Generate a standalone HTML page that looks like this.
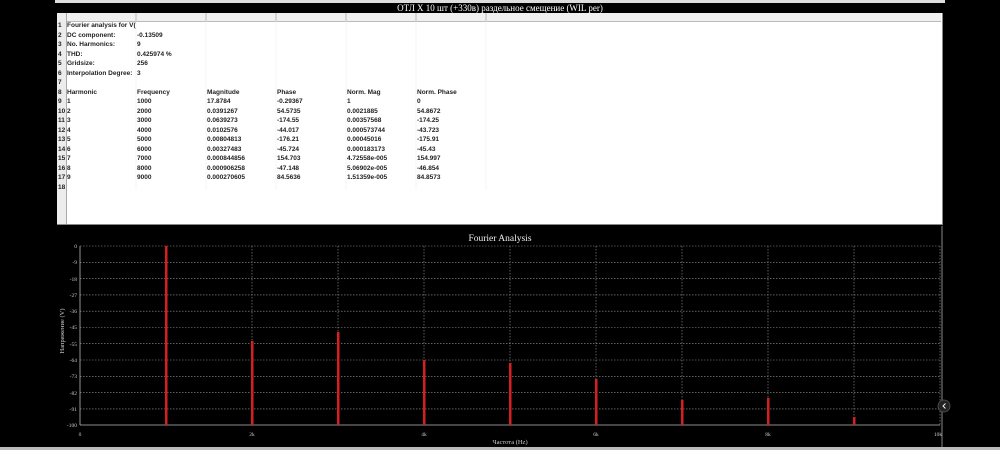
<!DOCTYPE html>
<html><head><meta charset="utf-8"><style>
html,body{margin:0;padding:0;width:1000px;height:450px;background:#000;overflow:hidden;font-family:"Liberation Sans",sans-serif}
.abs{position:absolute}
.t{position:absolute;font-size:6.5px;font-weight:bold;color:#222;white-space:nowrap;line-height:9px}
.rn{position:absolute;left:57px;width:9px;font-size:6.5px;font-weight:bold;color:#222;line-height:9px;text-align:left;padding-left:1px}
</style></head><body>
<div class="abs" style="left:55px;top:0;width:890px;height:3px;background:#ddd"></div>
<div class="abs" style="left:55px;top:3px;width:890px;height:10px;background:#000;color:#fff;font-family:'Liberation Serif',serif;font-size:9px;line-height:10px;text-align:center">ОТЛ X 10 шт (+330в) раздельное смещение (WIL per)</div>
<div class="abs" style="left:57px;top:13px;width:884px;height:211px;background:#fff;border:1px solid #888;border-top:none"></div>
<div class="abs" style="left:57px;top:13px;width:884px;height:8px;background:#f0f0f0;border-bottom:1px solid #bbb"></div>
<div class="abs" style="left:57px;top:13px;width:9px;height:211px;background:#ececec;border-right:1px solid #aaa"></div>
<svg class="abs" style="left:0;top:0" width="1000" height="230">
<g stroke="#aaa" stroke-width="0.8">
<line x1="136" y1="13" x2="136" y2="21"/><line x1="206" y1="13" x2="206" y2="21"/><line x1="276" y1="13" x2="276" y2="21"/><line x1="346" y1="13" x2="346" y2="21"/><line x1="416" y1="13" x2="416" y2="21"/><line x1="486" y1="13" x2="486" y2="21"/>
</g>
<g stroke="#eee" stroke-width="0.6">
<line x1="136" y1="21" x2="136" y2="190"/><line x1="206" y1="21" x2="206" y2="190"/><line x1="276" y1="21" x2="276" y2="190"/><line x1="346" y1="21" x2="346" y2="190"/><line x1="416" y1="21" x2="416" y2="190"/><line x1="486" y1="21" x2="486" y2="190"/>
</g>
</svg>
<div id="rows"></div>
<div class="rn" style="top:21px">1</div><div class="t" style="left:67px;top:21px">Fourier analysis for V(</div>
<div class="rn" style="top:30.5px">2</div><div class="t" style="left:67px;top:30.5px">DC component:</div><div class="t" style="left:137px;top:30.5px">-0.13509</div>
<div class="rn" style="top:40px">3</div><div class="t" style="left:67px;top:40px">No. Harmonics:</div><div class="t" style="left:137px;top:40px">9</div>
<div class="rn" style="top:49.5px">4</div><div class="t" style="left:67px;top:49.5px">THD:</div><div class="t" style="left:137px;top:49.5px">0.425974 %</div>
<div class="rn" style="top:59px">5</div><div class="t" style="left:67px;top:59px">Gridsize:</div><div class="t" style="left:137px;top:59px">256</div>
<div class="rn" style="top:68.5px">6</div><div class="t" style="left:67px;top:68.5px">Interpolation Degree:</div><div class="t" style="left:137px;top:68.5px">3</div>
<div class="rn" style="top:78px">7</div>
<div class="rn" style="top:87.5px">8</div><div class="t" style="left:67px;top:87.5px">Harmonic</div><div class="t" style="left:137px;top:87.5px">Frequency</div><div class="t" style="left:207px;top:87.5px">Magnitude</div><div class="t" style="left:277px;top:87.5px">Phase</div><div class="t" style="left:347px;top:87.5px">Norm. Mag</div><div class="t" style="left:417px;top:87.5px">Norm. Phase</div>
<div class="rn" style="top:97px">9</div><div class="t" style="left:67px;top:97px">1</div><div class="t" style="left:137px;top:97px">1000</div><div class="t" style="left:207px;top:97px">17.8784</div><div class="t" style="left:277px;top:97px">-0.29367</div><div class="t" style="left:347px;top:97px">1</div><div class="t" style="left:417px;top:97px">0</div>
<div class="rn" style="top:106.5px">10</div><div class="t" style="left:67px;top:106.5px">2</div><div class="t" style="left:137px;top:106.5px">2000</div><div class="t" style="left:207px;top:106.5px">0.0391267</div><div class="t" style="left:277px;top:106.5px">54.5735</div><div class="t" style="left:347px;top:106.5px">0.0021885</div><div class="t" style="left:417px;top:106.5px">54.8672</div>
<div class="rn" style="top:116px">11</div><div class="t" style="left:67px;top:116px">3</div><div class="t" style="left:137px;top:116px">3000</div><div class="t" style="left:207px;top:116px">0.0639273</div><div class="t" style="left:277px;top:116px">-174.55</div><div class="t" style="left:347px;top:116px">0.00357568</div><div class="t" style="left:417px;top:116px">-174.25</div>
<div class="rn" style="top:125.5px">12</div><div class="t" style="left:67px;top:125.5px">4</div><div class="t" style="left:137px;top:125.5px">4000</div><div class="t" style="left:207px;top:125.5px">0.0102576</div><div class="t" style="left:277px;top:125.5px">-44.017</div><div class="t" style="left:347px;top:125.5px">0.000573744</div><div class="t" style="left:417px;top:125.5px">-43.723</div>
<div class="rn" style="top:135px">13</div><div class="t" style="left:67px;top:135px">5</div><div class="t" style="left:137px;top:135px">5000</div><div class="t" style="left:207px;top:135px">0.00804813</div><div class="t" style="left:277px;top:135px">-176.21</div><div class="t" style="left:347px;top:135px">0.00045016</div><div class="t" style="left:417px;top:135px">-175.91</div>
<div class="rn" style="top:144.5px">14</div><div class="t" style="left:67px;top:144.5px">6</div><div class="t" style="left:137px;top:144.5px">6000</div><div class="t" style="left:207px;top:144.5px">0.00327483</div><div class="t" style="left:277px;top:144.5px">-45.724</div><div class="t" style="left:347px;top:144.5px">0.000183173</div><div class="t" style="left:417px;top:144.5px">-45.43</div>
<div class="rn" style="top:154px">15</div><div class="t" style="left:67px;top:154px">7</div><div class="t" style="left:137px;top:154px">7000</div><div class="t" style="left:207px;top:154px">0.000844856</div><div class="t" style="left:277px;top:154px">154.703</div><div class="t" style="left:347px;top:154px">4.72558e-005</div><div class="t" style="left:417px;top:154px">154.997</div>
<div class="rn" style="top:163.5px">16</div><div class="t" style="left:67px;top:163.5px">8</div><div class="t" style="left:137px;top:163.5px">8000</div><div class="t" style="left:207px;top:163.5px">0.000906258</div><div class="t" style="left:277px;top:163.5px">-47.148</div><div class="t" style="left:347px;top:163.5px">5.06902e-005</div><div class="t" style="left:417px;top:163.5px">-46.854</div>
<div class="rn" style="top:173px">17</div><div class="t" style="left:67px;top:173px">9</div><div class="t" style="left:137px;top:173px">9000</div><div class="t" style="left:207px;top:173px">0.000270605</div><div class="t" style="left:277px;top:173px">84.5636</div><div class="t" style="left:347px;top:173px">1.51359e-005</div><div class="t" style="left:417px;top:173px">84.8573</div>
<div class="rn" style="top:182.5px">18</div>

<svg class="abs" style="left:0;top:226px" width="1000" height="224" font-family="Liberation Serif, serif">
<text x="500" y="15" fill="#eee" font-size="9.5" text-anchor="middle">Fourier Analysis</text>
<g stroke="#999" stroke-width="0.6" stroke-dasharray="1.5,1.5">
<line x1="80" y1="20" x2="940" y2="20"/><line x1="80" y1="36.3" x2="940" y2="36.3"/><line x1="80" y1="52.6" x2="940" y2="52.6"/><line x1="80" y1="68.9" x2="940" y2="68.9"/><line x1="80" y1="85.2" x2="940" y2="85.2"/><line x1="80" y1="101.5" x2="940" y2="101.5"/><line x1="80" y1="117.7" x2="940" y2="117.7"/><line x1="80" y1="134" x2="940" y2="134"/><line x1="80" y1="150.3" x2="940" y2="150.3"/><line x1="80" y1="166.6" x2="940" y2="166.6"/><line x1="80" y1="182.9" x2="940" y2="182.9"/>
<line x1="252" y1="20" x2="252" y2="199"/><line x1="338" y1="20" x2="338" y2="199"/><line x1="424" y1="20" x2="424" y2="199"/><line x1="510" y1="20" x2="510" y2="199"/><line x1="596" y1="20" x2="596" y2="199"/><line x1="682" y1="20" x2="682" y2="199"/><line x1="768" y1="20" x2="768" y2="199"/><line x1="854" y1="20" x2="854" y2="199"/><line x1="940" y1="20" x2="940" y2="199"/>
</g>
<line x1="80" y1="20" x2="80" y2="199" stroke="#bbb" stroke-width="0.8"/>
<line x1="80" y1="199" x2="940" y2="199" stroke="#bbb" stroke-width="0.8"/>
<g fill="#d42020">
<rect x="165" y="20" width="2.5" height="179"/><rect x="251" y="115" width="2.5" height="84"/><rect x="337" y="106" width="2.5" height="93"/><rect x="423" y="134" width="2.5" height="65"/><rect x="509" y="137" width="2.5" height="62"/><rect x="595" y="153" width="2.5" height="46"/><rect x="681" y="174" width="2.5" height="25"/><rect x="767" y="172" width="2.5" height="27"/><rect x="853" y="191" width="2.5" height="8"/>
</g>
<g fill="#ccc" font-size="5.5" text-anchor="end">
<text x="77" y="22">0</text><text x="77" y="38">-9</text><text x="77" y="55">-18</text><text x="77" y="71">-27</text><text x="77" y="87">-36</text><text x="77" y="103">-45</text><text x="77" y="120">-55</text><text x="77" y="136">-64</text><text x="77" y="152">-73</text><text x="77" y="169">-82</text><text x="77" y="185">-91</text><text x="77" y="201">-100</text>
</g>
<g fill="#ccc" font-size="5.5" text-anchor="middle">
<text x="80" y="210">0</text><text x="252" y="210">2k</text><text x="424" y="210">4k</text><text x="596" y="210">6k</text><text x="768" y="210">8k</text><text x="938" y="210">10k</text>
</g>
<text x="510" y="218" fill="#ccc" font-size="6.5" text-anchor="middle">Частота (Hz)</text>
<text transform="translate(64,105) rotate(-90)" fill="#ccc" font-size="6.5" text-anchor="middle">Напряжение (V)</text>
<line x1="942" y1="0" x2="942" y2="221" stroke="#888" stroke-width="1"/>
<rect x="0" y="221" width="1000" height="3" fill="#bbb"/>
<circle cx="944" cy="180" r="6" fill="#222" stroke="#555" stroke-width="0.8"/>
<path d="M945.5 177.5 L943 180 L945.5 182.5" stroke="#eee" stroke-width="1" fill="none"/>
</g>
</svg>
</body></html>
